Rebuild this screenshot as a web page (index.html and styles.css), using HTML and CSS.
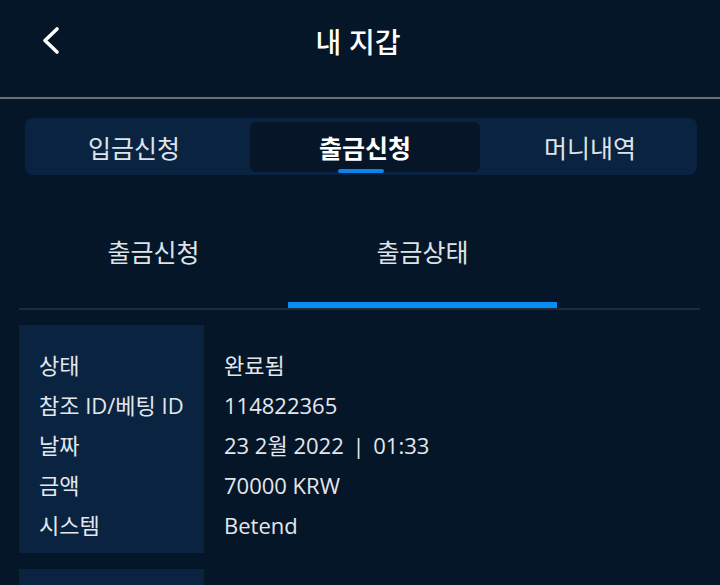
FILE: index.html
```html
<!DOCTYPE html>
<html lang="ko">
<head>
    <meta charset="UTF-8">
    <title>내 지갑</title>
    <link rel="stylesheet" href="styles.css">
</head>
<body>
<div class="header">
    <button class="back" aria-label="뒤로">
        <svg width="22" height="30" viewBox="0 0 22 30"><path d="M16 3 L4 14.5 L16 26" fill="none" stroke="#fff" stroke-width="3.6" stroke-linecap="round" stroke-linejoin="round"/></svg>
    </button>
    <div class="title">내 지갑</div>
    <div></div>
</div>

<div class="segment">
    <div class="segItem">입금신청</div>
    <div class="segItem active">출금신청<span class="segBar"></span></div>
    <div class="segItem">머니내역</div>
</div>

<div class="subTabs">
    <div class="subTab">출금신청</div>
    <div class="subTab active">출금상태</div>
</div>

<div class="record">
    <div class="labels">
        <div>상태</div>
        <div>참조 ID/베팅 ID</div>
        <div>날짜</div>
        <div>금액</div>
        <div>시스템</div>
    </div>
    <div class="values">
        <div>완료됨</div>
        <div>114822365</div>
        <div>23 2월 2022 <span class="sep">|</span> 01:33</div>
        <div>70000 KRW</div>
        <div>Betend</div>
    </div>
</div>

<div class="record next">
    <div class="labels"></div>
</div>
</body>
</html>
```

FILE: styles.css
```css
body{
    margin:0;
    background:#061629;
    color:#e3e7ec;
    font-family:"Open Sans","Noto Sans CJK KR",sans-serif;
    overflow:hidden;
}
.header{
    display:grid;
    grid-template-columns:1fr auto 1fr;
    align-items:center;
    align-content:start;
    height:99px;
    padding-top:21px;
    box-sizing:border-box;
    border-bottom:2px solid #6b7079;
}
.back{
    justify-self:start;
    margin-left:41px;
    padding:0;
    border:none;
    background:none;
    height:40px;
    display:flex;
    align-items:center;
}
.title{
    font-family:"Noto Sans CJK KR",sans-serif;
    font-size:28px;
    font-weight:500;
    line-height:40px;
    color:#fff;
    margin-left:-4px;
}

.segment{
    display:grid;
    grid-template-columns:220px 230px 1fr;
    align-items:center;
    height:57px;
    margin:19px 23px 0 25px;
    padding:0 5px;
    background:#0a2340;
    border-radius:8px;
}
.segItem{
    position:relative;
    height:50px;
    line-height:50px;
    text-align:center;
    font-family:"Noto Sans CJK KR",sans-serif;
    font-size:25px;
    color:#dfe4ea;
}
.segItem:first-child{
    padding-right:12px;
}
.segItem:last-child{
    padding-left:8px;
}
.segItem.active{
    margin-top:1px;
    background:#061628;
    border-radius:6px;
    font-weight:700;
    color:#fff;
}
.segBar{
    position:absolute;
    left:88px;
    bottom:-1px;
    width:46px;
    height:4px;
    border-radius:2px;
    background:#0a84e8;
}

.subTabs{
    display:flex;
    margin:0 20px 0 19px;
    border-bottom:2px solid #1c2a3b;
}
.subTab{
    width:269px;
    height:133px;
    box-sizing:border-box;
    padding-top:59px;
    line-height:34px;
    text-align:center;
    font-family:"Noto Sans CJK KR",sans-serif;
    font-size:25px;
    color:#dfe3e8;
    border-bottom:6px solid transparent;
}
.subTab.active{
    border-bottom-color:#0a8cf5;
}

.record{
    display:flex;
    margin:15px 0 0 19px;
    font-size:22px;
    line-height:40px;
}
.record.next{
    margin-top:16px;
}
.labels{
    width:185px;
    box-sizing:border-box;
    padding:20px 0 8px 20px;
    background:#0a2340;
    white-space:nowrap;
}
.next .labels{
    height:228px;
}
.values{
    padding:20px 0 8px 20px;
    white-space:nowrap;
}
.sep{
    margin:0 3px;
}
```
